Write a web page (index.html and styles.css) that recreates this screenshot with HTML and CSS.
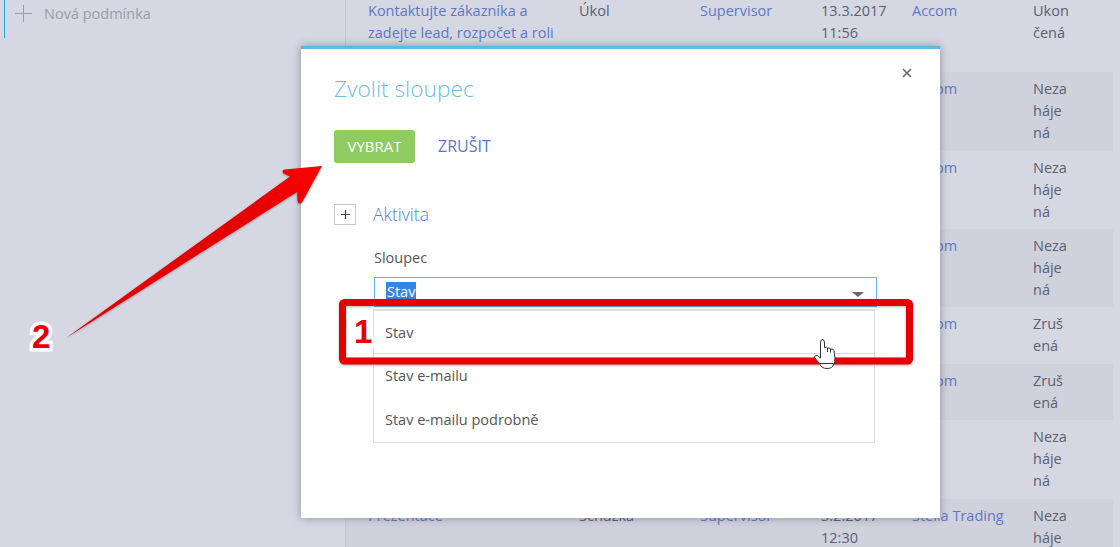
FILE: index.html
```html
<!DOCTYPE html>
<html lang="cs">

<head>
    <meta charset="utf-8">
    <meta name="viewport" content="width=device-width, initial-scale=1.0">
    <title>Zvolit sloupec</title>
    <link rel="stylesheet" href="styles.css">
</head>

<body>

    <div class="page">
        <aside class="filters">
            <div class="new-condition">
                <svg class="plus" width="18" height="18" viewBox="0 0 18 18"><path d="M8.500 0V17M0 8.500H17" stroke="#9a9ca9" stroke-width="1" fill="none"/></svg>
                <span>Nová podmínka</span>
            </div>
        </aside>

        <section class="list">
            <div class="row row-light">
                <a>Kontaktujte zákazníka a zadejte lead, rozpočet a roli v procesu</a>
                <span>Úkol</span>
                <a>Supervisor</a>
                <span>13.3.2017<br>11:56</span>
                <a>Accom</a>
                <span>Ukon<br>čená</span>
            </div>
            <div class="row row-dark row-tall">
                <a></a><span></span><a></a><span></span>
                <a>Accom</a>
                <span>Neza<br>háje<br>ná</span>
            </div>
            <div class="row row-light">
                <a></a><span></span><a></a><span></span>
                <a>Accom</a>
                <span>Neza<br>háje<br>ná</span>
            </div>
            <div class="row row-dark">
                <a></a><span></span><a></a><span></span>
                <a>Accom</a>
                <span>Neza<br>háje<br>ná</span>
            </div>
            <div class="row row-light">
                <a></a><span></span><a></a><span></span>
                <a>Accom</a>
                <span>Zruš<br>ená</span>
            </div>
            <div class="row row-dark row-short">
                <a></a><span></span><a></a><span></span>
                <a>Accom</a>
                <span>Zruš<br>ená</span>
            </div>
            <div class="row row-light row-tall">
                <a></a><span></span><a></a><span></span>
                <a></a>
                <span>Neza<br>háje<br>ná</span>
            </div>
            <div class="row row-dark">
                <a>Prezentace</a>
                <span>Schůzka</span>
                <a>Supervisor</a>
                <span>3.2.2017<br>12:30</span>
                <a>Stella Trading</a>
                <span>Neza<br>háje</span>
            </div>
        </section>
    </div>

    <div class="modal">
        <svg class="close" width="10" height="10" viewBox="0 0 10 10"><path d="M1 1L9 9M9 1L1 9" stroke="#666" stroke-width="1.6" fill="none"/></svg>
        <h2>Zvolit sloupec</h2>
        <div class="buttons">
            <button class="btn-ok">VYBRAT</button>
            <button class="btn-cancel">ZRUŠIT</button>
        </div>
        <div class="group">
            <span class="expander"><svg width="9" height="9" viewBox="0 0 9 9"><path d="M4.500 0V9M0 4.500H9" stroke="#444" stroke-width="1.2" fill="none"/></svg></span>
            <span class="group-name">Aktivita</span>
        </div>
        <div class="field">
            <label>Sloupec</label>
            <div class="combo">
                <span class="selected-text">Stav</span>
                <span class="caret"></span>
            </div>
            <ul class="options">
                <li class="current">Stav</li>
                <li>Stav e-mailu</li>
                <li>Stav e-mailu podrobně</li>
            </ul>
        </div>
    </div>

    <!-- sipka a ramecek z navodu -->
    <svg class="marks" width="1120" height="547" viewBox="0 0 1120 547">
        <defs>
            <linearGradient id="arrowfill" x1="66" y1="338" x2="322" y2="166" gradientUnits="userSpaceOnUse">
                <stop offset="0" stop-color="#e00000"/>
                <stop offset="0.75" stop-color="#e60000"/>
                <stop offset="1" stop-color="#ff0000"/>
            </linearGradient>
        </defs>
        <rect class="frame" x="342.500" y="302.500" width="567" height="58.500" rx="2"/>
        <path class="arrow" d="M66 338L290 176.500L283.500 173.500Q281 170 285 169.500L322 166L302 202.500Q298 205 297.500 201L297 192Z"/>
        <path class="hand" d="M820.500 343Q820.500 339.500 822.500 339.500Q824.500 339.500 824.500 343V347.500Q827 346.500 827.500 348Q830 347.500 830.500 349Q833.500 348.500 834 350.500L835 358Q835 362 833.500 364.500Q832.500 368.500 827 368.500Q821.500 368.500 819.500 363.500Q815.500 359 814.500 357Q815 355 817.500 355.500L820.500 358Z"/>
        <path class="hand-lines" d="M827.500 348V352M830.500 349V352.500M819.500 363.500H833.500"/>
    </svg>
    <span class="mark-number mark-one">1</span>
    <span class="mark-number mark-two">2</span>

</body>

</html>
```

FILE: styles.css
```css
* {
    box-sizing: border-box;
}

html,
body {
    margin: 0;
    height: 100%;
    overflow: hidden;
}

body {
    font-family: "Open Sans", "Liberation Sans", sans-serif;
    font-size: 14.5px;
    line-height: 22px;
    color: #5c6170;
    background: #d5d7e3;
}

.page {
    display: flex;
    height: 547px;
    overflow: hidden;
}

.filters {
    width: 346px;
    flex: none;
    border-right: 1px solid #c5c7d3;
}

.new-condition {
    display: flex;
    align-items: center;
    gap: 11px;
    height: 38px;
    margin-left: 4px;
    padding: 0 0 10px 10px;
    border-left: 1px solid #29a5dd;
    color: #9a9da9;
}

.list {
    flex: none;
    width: 767px;
    margin-top: -6px;
}

.row {
    display: grid;
    grid-template-columns: 211px 121px 121px 91px 121px 1fr;
    padding: 6px 0 6px 22px;
    min-height: 57px;
}

.row-tall {
    min-height: 79px;
}

.row-short {
    min-height: 56px;
}

.row-light {
    background: #d5d7e3;
}

.row-dark {
    background: #cfd1dd;
}

.row a {
    color: #5f78c6;
}

.row a:first-child {
    padding-right: 15px;
}

.modal {
    position: absolute;
    left: 301px;
    top: 46px;
    width: 639px;
    height: 472px;
    padding: 25px 33px 0;
    background: #fff;
    border-top: 3px solid #64b8e0;
    box-shadow: 0 0 8px rgba(60, 60, 80, 0.45);
}

.close {
    position: absolute;
    right: 28px;
    top: 19px;
}

.modal h2 {
    margin: 0;
    font-size: 22.700px;
    line-height: 30px;
    font-weight: 300;
    color: #6dbbe6;
}

.buttons {
    display: flex;
    align-items: center;
    gap: 23px;
    margin-top: 26px;
}

.buttons button {
    font-family: inherit;
    border: 0;
    padding: 0 0 2px;
    background: none;
}

.buttons .btn-ok {
    width: 81px;
    height: 33px;
    border-radius: 3px;
    background: #8ecb60;
    color: #fff;
    font-size: 15px;
}

.buttons .btn-cancel {
    color: #5b78c8;
    font-size: 16px;
}

.group {
    display: flex;
    align-items: center;
    gap: 17px;
    margin-top: 40px;
}

.expander {
    display: flex;
    align-items: center;
    justify-content: center;
    width: 22px;
    height: 21px;
    border: 1px solid #c8c8c8;
}

.group-name {
    font-size: 17.500px;
    font-weight: 300;
    color: #4d84d6;
}

.field {
    margin: 22px 0 0 40px;
}

.field label {
    display: block;
    color: #555;
}

.combo {
    display: flex;
    align-items: center;
    justify-content: space-between;
    width: 503px;
    height: 30px;
    margin-top: 8px;
    padding: 0 12px 0 11px;
    border: 1px solid #64b5e8;
}

.selected-text {
    padding: 0 1px;
    background: #3584e4;
    color: #fff;
    line-height: 20px;
}

.caret {
    width: 0;
    height: 0;
    margin-top: 4px;
    border-style: solid;
    border-width: 5px 6px 0;
    border-color: #666 transparent transparent;
}

.options {
    list-style: none;
    width: 502px;
    margin: 2px 0 0 -1px;
    padding: 0;
    border: 1px solid #dedede;
    border-top-width: 2px;
    color: #555;
}

.options li {
    height: 44px;
    padding: 11px 11px;
}

.options .current {
    height: 43px;
    border-bottom: 1px solid #dedede;
}

.marks {
    position: absolute;
    left: 0;
    top: 0;
}

.frame {
    fill: none;
    stroke: #e60000;
    stroke-width: 7;
    filter: drop-shadow(0 1px 1px rgba(60, 60, 60, 0.4));
}

.arrow {
    fill: url(#arrowfill);
    filter: drop-shadow(0 1px 1px rgba(60, 60, 60, 0.4));
}

.hand {
    fill: #fff;
    stroke: #333;
    stroke-width: 1;
}

.hand-lines {
    fill: none;
    stroke: #333;
    stroke-width: 1;
}

.mark-number {
    position: absolute;
    font-family: "Liberation Sans", sans-serif;
    font-weight: bold;
    font-size: 33px;
    line-height: 34px;
    color: #e60000;
    -webkit-text-stroke: 7px #fff;
    paint-order: stroke fill;
}

.mark-one {
    left: 354px;
    top: 315px;
}

.mark-two {
    left: 32px;
    top: 320px;
}
```
